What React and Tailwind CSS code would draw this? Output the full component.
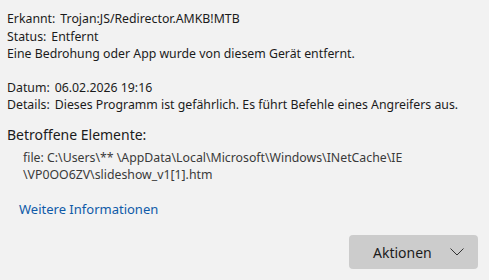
export default function App() {
  return (
    <div className="w-[489px] h-[280px] bg-[#f2f2f2] text-[#1b1b1b] overflow-hidden relative" style={{ fontFamily: '"Noto Sans", "Segoe UI", sans-serif' }}>
      <div className="pl-[7px] pt-[10px] text-[12.3px] leading-[17.5px]">
        <div>Erkannt:<span className="ml-[5px]">Trojan:JS/Redirector.AMKB!MTB</span></div>
        <div>Status:<span className="ml-[5px]">Entfernt</span></div>
        <div>Eine Bedrohung oder App wurde von diesem Gerät entfernt.</div>
        <div className="mt-[16px]">Datum:<span className="ml-[5px]">06.02.2026 19:16</span></div>
        <div>Details:<span className="ml-[5px]">Dieses Programm ist gefährlich. Es führt Befehle eines Angreifers aus.</span></div>
        <div className="mt-[11px] text-[14px] leading-[19px]">Betroffene Elemente:</div>
        <div className="pl-[16px] mt-[5px] text-[#3a3a3a]">
          <div>file: C:\Users\** \AppData\Local\Microsoft\Windows\INetCache\IE</div>
          <div>\VP0OO6ZV\slideshow_v1[1].htm</div>
        </div>
        <div className="mt-[17px] text-[13px] text-[#0f5aa8] pl-[12px]">Weitere Informationen</div>
      </div>
      <div className="absolute left-[349px] top-[235px] w-[129px] h-[34px] rounded-[4px] bg-[#cccccc] flex items-center justify-between pl-[24px] pr-[14px] text-[14px]">
        <span>Aktionen</span>
        <svg width="14" height="8" viewBox="0 0 14 8" fill="none" stroke="#333" strokeWidth="1"><path d="M0.5 0.5 L7 7 L13.5 0.5" /></svg>
      </div>
    </div>
  );
}
